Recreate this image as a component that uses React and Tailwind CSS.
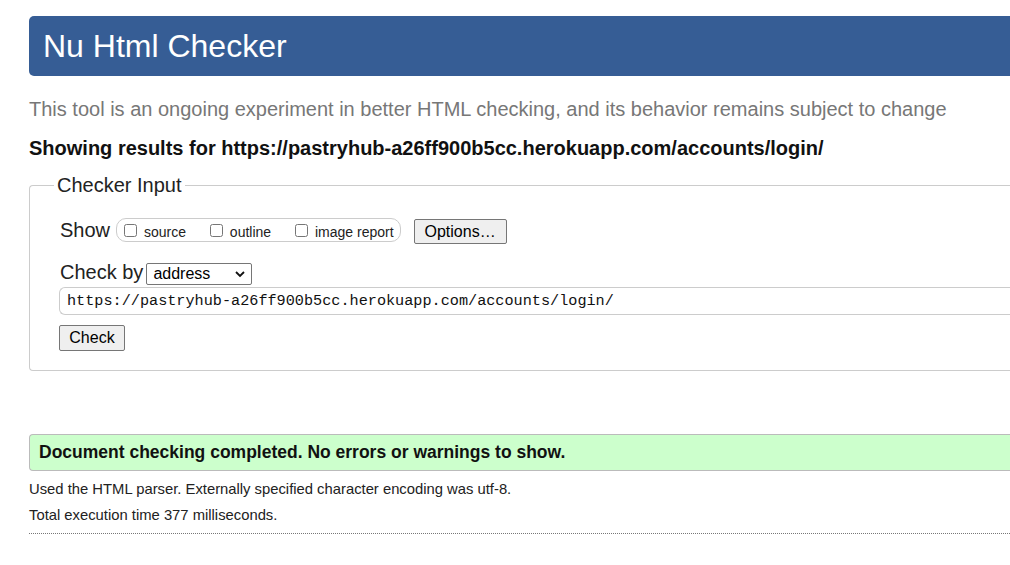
import React from "react";

function Box({ label }) {
  return (
    <label className="whitespace-nowrap text-[14px] leading-[16px]">
      <input
        type="checkbox"
        className="mt-[3px] mr-[3px] mb-[3px] ml-[4px] h-[13px] w-[13px] align-baseline"
      />{" "}
      {label}
    </label>
  );
}

export default function App() {
  return (
    <div className="h-[565px] w-full overflow-hidden bg-white font-['Liberation_Sans',Arial,sans-serif] text-[#222]">
      <div className="w-[1060px] pl-[29px] pt-[16px]">
        <h1 className="flex h-[60px] items-center rounded-l-[5px] bg-[#365d95] pl-[14px] text-[32px] font-normal text-white">
          Nu Html Checker
        </h1>

        <p className="mt-[22px] text-[20px] leading-[23px] text-[#777]">
          This tool is an ongoing experiment in better HTML checking, and its behavior remains subject to change
        </p>

        <p className="mt-[16px] text-[20px] font-bold leading-[23px] text-[#111]">
          Showing results for https://pastryhub-a26ff900b5cc.herokuapp.com/accounts/login/
        </p>

        <fieldset className="mt-[14px] rounded-l-[4px] border border-r-0 border-[#cccccc] pt-[21px] pb-[19px] pl-[24px]">
          <legend className="px-[3px] text-[20px] leading-[23px] text-[#222]">Checker Input</legend>
          <div className="pl-[5px]">
            <div className="flex items-baseline">
              <span className="ml-[1px] text-[20px] leading-[23px]">Show</span>
              <div className="ml-[6px] inline-flex h-[24px] items-center gap-[20px] rounded-[10px] border border-[#cccccc] pl-[3px] pr-[6px]">
                <Box label="source" />
                <Box label="outline" />
                <Box label="image report" />
              </div>
              <button className="ml-[13px] h-[25px] w-[93px] rounded-[2px] border border-[#767676] bg-[#efefef] text-[16px] leading-[18px] text-black">
                Options…
              </button>
            </div>

            <div className="mt-[17px] flex items-baseline">
              <span className="ml-[1px] text-[20px] leading-[23px]">Check by</span>
              <div className="ml-[3px] inline-flex h-[22px] w-[106px] items-center justify-between rounded-[2px] border border-[#767676] bg-white pl-[6px] pr-[5px] text-[16px] leading-[18px] text-black">
                <span>address</span>
                <svg width="12" height="12" viewBox="0 0 12 12" className="self-center">
                  <path d="M2 4 L6 8 L10 4" fill="none" stroke="#111" strokeWidth="1.8" />
                </svg>
              </div>
            </div>

            <div className="mt-[2px] flex h-[28px] items-center rounded-l-[6px] border border-r-0 border-[#cccccc] pl-[7px] font-['Liberation_Mono','DejaVu_Sans_Mono',monospace] text-[15.2px] text-[#111]">
              https://pastryhub-a26ff900b5cc.herokuapp.com/accounts/login/
            </div>

            <button className="mt-[10px] h-[26px] w-[66px] rounded-[2px] border border-[#767676] bg-[#efefef] text-[16px] leading-[18px] text-black">
              Check
            </button>
          </div>
        </fieldset>

        <div className="mt-[63px] flex h-[37px] items-center rounded-l-[4px] border border-r-0 border-[#bbbbbb] bg-[#ccffcc] pl-[9px] text-[17.5px] font-bold text-[#111]">
          Document checking completed. No errors or warnings to show.
        </div>

        <p className="mt-[10px] text-[14.8px] leading-[16px] text-[#222]">
          Used the HTML parser. Externally specified character encoding was utf-8.
        </p>
        <p className="mt-[10px] text-[14.8px] leading-[16px] text-[#222]">
          Total execution time 377 milliseconds.
        </p>
        <div className="mt-[10px] border-t border-dotted border-[#777]" />
      </div>
    </div>
  );
}
